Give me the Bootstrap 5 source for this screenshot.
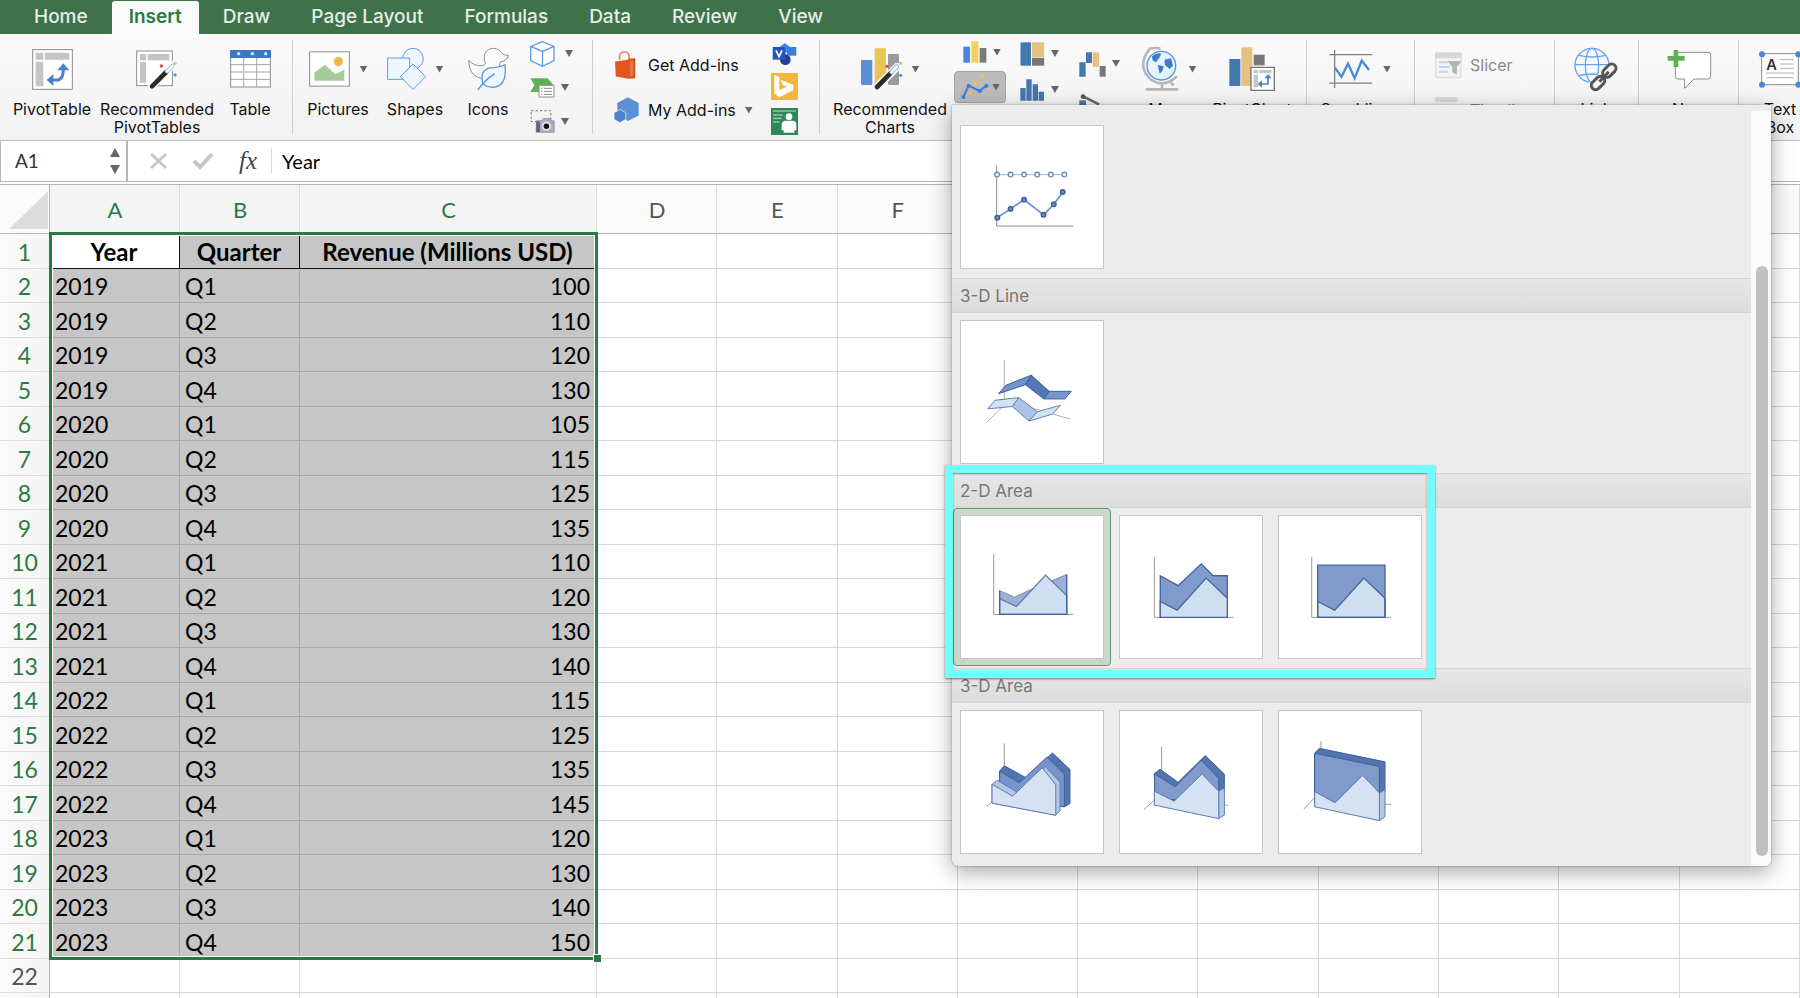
<!DOCTYPE html>
<html lang="en">
<head>
<meta charset="utf-8">
<meta name="viewport" content="width=device-width, initial-scale=1">
<title>Workbook - Insert chart</title>
<link href="https://cdn.jsdelivr.net/npm/bootstrap@5.3.0/dist/css/bootstrap.min.css" rel="stylesheet">
<style>
:root { --xl-green: #2c7a41; --ui: Inter, "Liberation Sans", sans-serif; --cell: Lato, "Liberation Sans", sans-serif; }
html, body { height: 100%; overflow: hidden; }
body { font-family: var(--ui); color: #111; background: #fff; }
button { font: inherit; color: inherit; background: none; border: 0; padding: 0; }
svg { display: block; flex: none; overflow: visible; }

.tabstrip { background: #3e724b; height: 34px; padding: 1px 14px 0; }
.tabstrip a { color: #e4ede6; font-size: 19px; font-weight: 500; line-height: 31px; padding: 0 17px; margin: 0 4px 0 3px; border-radius: 3px 3px 0 0; text-decoration: none; white-space: nowrap; }
.tabstrip a.active { background: #fafafa; color: #2c7a41; font-weight: 600; }

.ribbon { height: 107px; padding-left: 8px; background: linear-gradient(#fafafa, #f2f2f2); border-bottom: 1px solid #bdbdbd; font-size: 16px; line-height: 18px; }
.ribbon > * { flex: none; }
.divider { width: 1px; height: 94px; margin: 6px 9px 0 10px; background: #cfcfcf; }
.tool { padding-top: 10px; white-space: nowrap; }
.tool .pic { height: 50px; gap: 10px; margin-bottom: 6px; }
.caret { width: 8px; height: 7px; background: #666; clip-path: polygon(0 0, 100% 0, 50% 100%); flex: none; }
.w-s { width: 64px; } .w-m { width: 72px; } .w-l { width: 82px; } .w-xl { width: 88px; } .w-xxl { width: 122px; }
.stack { padding-top: 6px; }
.stack button { height: 27px; }
.off { color: #8a8a8a; }
.pressed { width: 52px; background: #bcbcbc !important; border: 1px solid #a2a2a2 !important; border-radius: 4px; }

.fbar { height: 44px; border-bottom: 4px double #b5b5b5; font-family: var(--cell); background: #fff; }
.namebox { width: 128px; border: 1px solid #b5b5b5; border-width: 0 2px 0 1px; padding-right: 6px; }
.namebox input { width: 90px; border: 0; background: none; font-size: 19px; padding: 0 0 0 14px; color: #333; outline: 0; }
.fbar .formula { border: 0; border-left: 1px solid #d8d8d8; font-size: 20px; padding: 0 0 0 10px; height: 26px; outline: 0; }
.up { width: 10px; height: 9px; background: #666; clip-path: polygon(50% 0, 100% 100%, 0 100%); }
.down { width: 10px; height: 9px; background: #666; clip-path: polygon(0 0, 100% 0, 50% 100%); }
.fx { font: italic 25px/26px "Liberation Serif", serif; color: #444; }

.sheet { position: relative; font-family: var(--cell); font-size: 23px; line-height: 30px; }
.sheet table { width: 100%; table-layout: fixed; border-collapse: separate; border-spacing: 0; white-space: nowrap; }
.sheet thead th { height: 49px; background: #fafafa; color: #555; font-weight: 400; font-size: 22px; text-align: center; padding: 1px 0 0 1px; border-right: 1px solid #dcdcdc; border-bottom: 1px solid #b5b5b5; }
.sheet thead th.hot { background: #f4f4f4; color: var(--xl-green); }
.sheet thead th.corner { border-right-color: #b0b0b0; }
.sheet tbody tr { height: 34px; }
.sheet tbody tr:nth-child(odd) { height: 35px; }
.sheet tbody th { font-weight: 400; text-align: center; background: linear-gradient(90deg, #fbfbfb, #f4f4f4); color: #555; padding: 1px 0 0; border-bottom: 1px solid #dedede; border-right: 1px solid #b0b0b0; }
.sheet tbody th.hot { color: var(--xl-green); }
.sheet td { padding: 1px 6px 0 5px; border-right: 1px solid #d6d6d6; border-bottom: 1px solid #d6d6d6; color: #000; }
.sheet td.sel { background: #c6c6c6; border-color: #a6a6a6; }
.sheet td.head { font-weight: 700; font-size: 24px; text-align: center; border-color: #111; }
.sheet td.first { background: #fff; }
.sheet td.num { text-align: right; }
.c-row { width: 50px; } .c-a { width: 130px; } .c-b { width: 120px; } .c-c { width: 297px; }
.frame { position: absolute; left: 49px; top: 47px; width: 549px; bottom: 68px; border: 3px solid var(--xl-green); box-shadow: inset 0 0 0 1px #fff; pointer-events: none; }
.frame::after { content: ""; position: absolute; right: -6px; bottom: -5px; width: 8px; height: 8px; background: var(--xl-green); border: solid #fff; border-width: 1px 0 0 1px; }

.gallery { position: absolute; z-index: 10; left: -2px; top: 71px; width: 819px; padding: 13px 20px 3px 0; background: #ececec; border-radius: 0 0 6px 6px; box-shadow: 0 0 2px rgba(0,0,0,.45), 0 6px 22px rgba(0,0,0,.35); }
.gallery h6 { height: 35px; line-height: 34px; margin: 0; padding-left: 8px; font-size: 17px; font-weight: 400; color: #777; background: linear-gradient(#e6e6e6, #dcdcdc); border: solid #d4d4d4; border-width: 1px 0; }
.opts { height: 160px; gap: 1px; padding-left: 1px; }
.opts button { width: 158px; height: 158px; padding: 6px; border: 1px solid transparent; border-radius: 4px; }
.opts button.chosen { background: #c8d9cc; border-color: #5f9b70; }
.opts svg { width: 144px; height: 144px; background: #fff; border: 1px solid #c6c6c6; overflow: hidden; }
.callout-box { position: absolute; left: -7px; top: -8px; width: 490px; bottom: -10px; border: 8px solid #74fbfb; box-shadow: 0 1px 2px rgba(0,0,0,.5), inset 0 1px 2px rgba(0,0,0,.4); pointer-events: none; z-index: 2; }
.track { position: absolute; right: 0; top: 6px; bottom: 0; width: 20px; background: #fafafa; border-radius: 0 0 6px 0; padding: 155px 3px 10px 5px; }
.thumb { height: 100%; border-radius: 6px; background: #c0c0c0; }
</style>
</head>
<body>
<nav class="tabstrip d-flex">
  <a href="#">Home</a><a href="#" class="active">Insert</a><a href="#">Draw</a><a href="#">Page Layout</a><a href="#">Formulas</a><a href="#">Data</a><a href="#">Review</a><a href="#">View</a>
</nav>

<div class="ribbon d-flex" role="toolbar" aria-label="Insert">
  <button class="tool w-xl d-flex flex-column align-items-center">
    <span class="pic d-flex align-items-center"><svg width="41" height="41" viewBox="96 56 123 123"><rect x="98" y="58" width="119" height="119" fill="#fff" stroke="#8c8c8c" stroke-width="3"/><path d="M107 67h23v21h-23zM135 67h73v21h-73zM107 94h23v74h-23z" fill="#c4c4c4"/><path d="M152 149h18q20 0 20-34" fill="none" stroke="#4a82c8" stroke-width="9"/><path d="M140 149l20-18v36zM190 99l-18 21h36z" fill="#4a82c8"/></svg></span>
    <span>PivotTable</span></button>
  <button class="tool w-xxl d-flex flex-column align-items-center">
    <span class="pic d-flex align-items-center"><svg width="42" height="40" viewBox="411 62 126 120"><rect x="413" y="68" width="107" height="104" fill="#fff" stroke="#8c8c8c" stroke-width="3"/><path d="M423 77h18v19h-18zM446 77h65v19h-65zM423 101h18v62h-18z" fill="#c4c4c4"/><path d="M459 174l65-66" stroke="#fff" stroke-width="22" stroke-linecap="round"/><path d="M459 174l43-43" stroke="#2c2c2c" stroke-width="14" stroke-linecap="round"/><path d="M504 129l16-16" stroke="#9bc0dc" stroke-width="13" stroke-linecap="round"/><path d="M504 129l16-16" stroke="#fff" stroke-width="8" stroke-linecap="round"/><circle cx="487" cy="113" r="5" fill="#cf4a5a"/><circle cx="528" cy="105" r="5" fill="#eebc4a"/><circle cx="528" cy="140" r="5" fill="#5b97e0"/></svg></span>
    <span>Recommended</span><span>PivotTables</span></button>
  <button class="tool w-s d-flex flex-column align-items-center">
    <span class="pic d-flex align-items-center"><svg width="41" height="38" viewBox="690 62 123 114"><rect x="692" y="64" width="119" height="109" fill="#fff" stroke="#8c8c8c" stroke-width="3"/><path d="M690 62h123v24h-123z" fill="#3f78c2"/><path d="M692 106h119M692 128h119M692 150h119M731 86v87M770 86v87" stroke="#a8a8a8" stroke-width="3"/><g fill="#dce8f6"><circle cx="716" cy="73" r="5"/><circle cx="757" cy="73" r="5"/><circle cx="797" cy="73" r="5"/></g></svg></span>
    <span>Table</span></button>
  <div class="divider"></div>
  <button class="tool w-m d-flex flex-column align-items-center">
    <span class="pic d-flex align-items-center"><svg width="41" height="36" viewBox="38 64 123 107"><rect x="40" y="66" width="119" height="103" fill="#fff" stroke="#8c8c8c" stroke-width="3"/><path d="M54 153v-25l32-23 31 28 27-14v34z" fill="#a5cb98"/><circle cx="126" cy="95" r="14" fill="#efb84c"/></svg><i class="caret"></i></span>
    <span>Pictures</span></button>
  <button class="tool w-l d-flex flex-column align-items-center">
    <span class="pic d-flex align-items-center"><svg width="39" height="42" viewBox="272 56 117 126"><g fill="#eef6fe" stroke="#5b9bea" stroke-width="3"><circle cx="350" cy="88" r="31"/><path d="M274 86h66v64h-66z"/><path d="M350 104l38 38-38 38-38-38z"/></g></svg><i class="caret"></i></span>
    <span>Shapes</span></button>
  <button class="tool w-s d-flex flex-column align-items-center">
    <span class="pic d-flex align-items-center"><svg width="41" height="42" viewBox="499 55 123 126"><path d="M502 92c10 12 22 16 36 16c8 0 14-3 13-8c-10-22 2-44 24-44c14 0 22 8 26 16c5 4 12 5 19 5c-2 12-12 18-24 20c-4 6-2 12 2 18c-4 22-22 36-46 32c-34 0-52-22-50-55z" fill="#fafafa" stroke="#8c8c8c" stroke-width="3"/><path d="M544 164c-10-36 6-50 30-50c14 0 24-4 36-8c4 40-6 62-30 66c-14 2-28-2-36-8z" fill="#eef6fe" stroke="#5b9bea" stroke-width="4"/><path d="M529 180q20-28 50-48" fill="none" stroke="#5b9bea" stroke-width="5"/></svg></span>
    <span>Icons</span></button>
  <div class="stack w-m d-flex flex-column" style="padding-left:10px;gap:7px">
    <button class="d-flex align-items-center" aria-label="3D Models" style="gap:10px"><svg width="25" height="26" viewBox="690 29 74 77"><path d="M727 31l34 14v42l-34 17-35-17v-42zM692 45l35 15 34-15M727 60v44" fill="#fff" stroke="#5b9bea" stroke-width="4"/></svg><i class="caret"></i></button>
    <button class="d-flex align-items-center" style="gap:6px" aria-label="SmartArt"><svg width="25" height="20" viewBox="689 142 73 60"><path d="M689 143h52l18 21-14 20h-56l12-20z" fill="#5fb157"/><path d="M715 164h45v35h-45z" fill="#fff" stroke="#8c8c8c" stroke-width="3"/><path d="M721 173h4M721 182h4M721 191h4M730 173h24M730 182h24M730 191h24" stroke="#8c8c8c" stroke-width="3"/></svg><i class="caret"></i></button>
    <button class="d-flex align-items-center" style="gap:6px" aria-label="Screenshot"><svg width="25" height="23" viewBox="691 245 73 68"><path d="M694 247h58v32h-58z" fill="none" stroke="#777" stroke-width="3" stroke-dasharray="7 6"/><path d="M709 277h16l5-7h20l4 7h8v34h-53z" fill="#a9afbb" stroke="#7b8290" stroke-width="2"/><path d="M709 279h11v31h-11z" fill="#5f6776"/><circle cx="739" cy="293" r="14" fill="#dde1ea"/><circle cx="739" cy="293" r="8" fill="#111"/></svg><i class="caret"></i></button>
  </div>
  <div class="divider ms-0"></div>
  <div class="tool d-flex flex-column" style="padding-left:12px;width:169px">
    <button class="d-flex align-items-center" style="height:42px;gap:11px"><svg width="23" height="28" viewBox="286 149 68 86"><path d="M302 176v-12q2-12 15-12t14 12v10" fill="none" stroke="#f0814c" stroke-width="5"/><path d="M288 181l40-5v58l-38-7z" fill="#e2561f"/><path d="M328 173l22-2v62l-22 1z" fill="#d64d18"/><path d="M333 180l11-1v46l-11 2z" fill="#e97447"/></svg><span>Get Add-ins</span></button>
    <button class="d-flex align-items-center" style="height:48px;gap:9px"><svg width="25" height="26" viewBox="281 290 76 79"><path d="M323 291l33 17v38l-33 17-32-17v-38z" fill="#5a91d6"/><path d="M299 328l18 10v20l-18 10-18-10v-20z" fill="#4a82cc" stroke="#fff" stroke-width="2"/></svg><span>My Add-ins</span><i class="caret"></i></button>
  </div>
  <div class="stack d-flex flex-column" style="width:38px;gap:6px">
    <button aria-label="Visio"><svg width="27" height="22" viewBox="755 126 75 66"><path d="M793 126l22 16-22 16-20-16z" fill="#3c8de0"/><path d="M800 138h28v26h-28z" fill="#3a7fd6"/><circle cx="795" cy="176" r="16" fill="#1d3f94"/><path d="M757 138h38v38h-38z" fill="#2457b8"/><path d="M767 148l9 19 9-19" fill="none" stroke="#fff" stroke-width="5"/></svg></button>
    <button aria-label="Bing Maps"><svg width="27" height="27" viewBox="752 221 81 81"><path d="M752 221h81v81h-81z" fill="#f3b63c"/><path d="M762 227l15 6v40l22-11-12-6-6-15 38 15v17l-42 21-15-12z" fill="#fff"/></svg></button>
    <button style="padding-top:2px" aria-label="People Graph"><svg width="27" height="27" viewBox="752 325 81 81"><path d="M752 325h81v81h-81z" fill="#2f8657"/><path d="M758 334h69M758 346h30M758 356h26M758 367h20" stroke="#8dc3a4" stroke-width="5"/><circle cx="806" cy="351" r="10" fill="#fff"/><path d="M784 392v-17q0-12 12-12h20q12 0 12 12v17h-6v7h-32v-7z" fill="#fff"/></svg></button>
  </div>
  <div class="divider"></div>
  <button class="tool w-xxl d-flex flex-column align-items-center">
    <span class="pic d-flex align-items-center"><svg width="41" height="42" viewBox="1026 148 123 126"><rect x="1026" y="184" width="34" height="75" rx="4" fill="#5b8ed2"/><rect x="1067" y="149" width="34" height="109" rx="4" fill="#e9c456"/><rect x="1107" y="166" width="33" height="93" rx="4" fill="#9a9a9a"/><path d="M1074 265l60-60" stroke="#f7f7f7" stroke-width="24" stroke-linecap="round"/><path d="M1074 265l40-41" stroke="#2c2c2c" stroke-width="14" stroke-linecap="round"/><path d="M1118 220l15-16" stroke="#8fb4d0" stroke-width="14" stroke-linecap="round"/><path d="M1118 220l15-16" stroke="#fff" stroke-width="8" stroke-linecap="round"/><circle cx="1104" cy="203" r="5" fill="#cf4a5a"/><circle cx="1145" cy="194" r="5" fill="#eebc4a"/><circle cx="1145" cy="230" r="5" fill="#5b97e0"/></svg><i class="caret"></i></span>
    <span>Recommended</span><span>Charts</span></button>

  <div class="position-relative" style="margin-left:3px;padding-top:7px">
    <button class="d-flex align-items-center" style="height:22px;gap:6px;padding-left:9px;margin-bottom:8px" aria-label="Column chart"><svg width="24" height="22" viewBox="70 125 72 66"><path d="M71 142h20v48h-20z" fill="#4a86e0"/><path d="M95 126h21v64h-21z" fill="#f6cf5c"/><path d="M120 146h20v44h-20z" fill="#7b7b7b"/></svg><i class="caret"></i></button>
    <button class="pressed d-flex align-items-center" style="height:32px;gap:3px;padding-left:6px" aria-label="Line and area chart" aria-expanded="true"><svg width="28" height="24" viewBox="62 227 84 72"><path d="M89 280l37-48" stroke="#f0bf4a" stroke-width="5" stroke-dasharray="9 4"/><path d="M69 293l16-34 33 16 20-16" fill="none" stroke="#3b7ddd" stroke-width="6"/><g fill="#3b7ddd"><circle cx="69" cy="293" r="6"/><circle cx="85" cy="259" r="6"/><circle cx="118" cy="275" r="6"/><circle cx="138" cy="259" r="6"/></g><g fill="#f4c24c"><circle cx="126" cy="232" r="5"/><circle cx="104" cy="252" r="5"/><circle cx="89" cy="280" r="5"/></g></svg><i class="caret"></i></button>

    <div class="gallery">
      <div class="opts d-flex"><button aria-label="Stacked line with markers"><svg viewBox="61 76 430 430"><path d="M169 196v183h232" fill="none" stroke="#8a8a8a" stroke-width="3"/><path d="M170 223h204" stroke="#a6c4ea" stroke-width="4"/><path d="M170 354l41-27 41-28 59 46 31-32 28-37" fill="none" stroke="#6690d0" stroke-width="5"/><g fill="#fff" stroke="#6f8ab8" stroke-width="4"><circle cx="170" cy="223" r="7"/><circle cx="211" cy="223" r="7"/><circle cx="252" cy="223" r="7"/><circle cx="292" cy="223" r="7"/><circle cx="333" cy="223" r="7"/><circle cx="374" cy="223" r="7"/></g><g fill="#6a86bd" stroke="#3f5d9c" stroke-width="4"><circle cx="171" cy="354" r="7"/><circle cx="211" cy="327" r="7"/><circle cx="252" cy="299" r="7"/><circle cx="311" cy="345" r="7"/><circle cx="342" cy="313" r="7"/><circle cx="369" cy="276" r="7"/></g></svg></button></div>
      <h6>3-D Line</h6>
      <div class="opts d-flex"><button aria-label="3-D line"><svg viewBox="61 661 430 430"><path d="M192 779v138l-53 50M192 900l200 58" fill="none" stroke="#b0b0b0" stroke-width="3"/><g stroke-width="3" stroke-linejoin="round" stroke="#3f5f9c"><path d="M175 881l21-25 78-31-18 29z" fill="#6f93cc"/><path d="M256 854l18-29 54 49-16 23z" fill="#5578b2"/><path d="M312 897l16-23h67l-20 23z" fill="#7797cc"/></g><g stroke-width="3" stroke-linejoin="round" stroke="#6580ae"><path d="M142 927l22-26 72-8-20 27z" fill="#d3e2f4"/><path d="M216 920l20-27 56 43-25 28z" fill="#abc3e4"/><path d="M267 964l25-28 70-20-24 27z" fill="#d3e2f4"/></g></svg></button></div>
      <section class="position-relative">
        <h6>2-D Area</h6>
        <div class="opts d-flex">
          <button class="chosen" aria-label="Area"><svg viewBox="61 168 430 430"><path d="M160 283v183h241" fill="none" stroke="#999" stroke-width="3"/><path d="M178 394l45 20 52-24 60-25 46-20v121h-203z" fill="#9cb0d6" stroke="#7387b4" stroke-width="3"/><path d="M178 418l51 24 88-95 64 62v57h-203z" fill="#cddff0" stroke="#5f79af" stroke-width="4"/><path d="M178 394v72h203v-121" fill="none" stroke="#45629f" stroke-width="4"/></svg></button>
          <button aria-label="Stacked area"><svg viewBox="539 168 430 430"><path d="M643 292v183h240" fill="none" stroke="#999" stroke-width="3"/><path d="M661 349l54 30 70-66 36 36h43v126h-203z" fill="#7f9acb" stroke="#45629f" stroke-width="4"/><path d="M661 427l51 26 88-97 64 61v58h-203z" fill="#cddff0" stroke="#45629f" stroke-width="4"/></svg></button>
          <button aria-label="100% stacked area"><svg viewBox="1017 168 430 430"><path d="M1116 292v183h240" fill="none" stroke="#999" stroke-width="3"/><path d="M1134 317h204v158h-204z" fill="#7f9acb"/><path d="M1134 427l52 26 88-97 64 61v58h-204z" fill="#cddff0" stroke="#45629f" stroke-width="4"/><path d="M1134 317h204v158h-204z" fill="none" stroke="#45629f" stroke-width="4"/></svg></button>
        </div>
        <div class="callout-box"></div>
      </section>
      <h6>3-D Area</h6>
      <div class="opts d-flex">
        <button aria-label="3-D area"><svg viewBox="61 154 430 430"><path d="M192 252v90M155 430l-17 13" stroke="#999" stroke-width="3"/><g stroke="#3f5f9c" stroke-width="3" stroke-linejoin="round"><path d="M178 336l14-16 66 36 80-75 53 50v103l-17 10-60-10-136-32z" fill="#5275b0"/><path d="M178 336l60 35 84-78 52 52v99l-60-8-136-40z" fill="#7595cc"/></g><g stroke="#5f79af" stroke-width="3" stroke-linejoin="round"><path d="M155 376l16-12 64 38 82-79 44 46v87l-13 13-193-36z" fill="#b1c6e4"/><path d="M155 376l62 36 90-86 41 52v92l-193-37z" fill="#d5e2f3"/></g></svg></button>
        <button aria-label="3-D stacked area"><svg viewBox="539 154 430 430"><path d="M665 262v70M643 424l-31 28M855 437l11 4" stroke="#999" stroke-width="3"/><g stroke="#3f5f9c" stroke-width="3" stroke-linejoin="round"><path d="M643 344l17-14 55 40 82-81 58 56v46l-17 10-193 38z" fill="#5275b0"/><path d="M643 344l63 39 79-80 53 55v50l-193 20z" fill="#7f9acb"/></g><g stroke="#5f79af" stroke-width="3" stroke-linejoin="round"><path d="M838 397l17-10v82l-17 11z" fill="#b1cae8"/><path d="M643 397l60 30 84-82 51 52v83l-195-41z" fill="#d5e2f3"/></g></svg></button>
        <button aria-label="3-D 100% stacked area"><svg viewBox="1017 154 430 430"><path d="M1144 246v30M1125 416l-33 35M1338 436l18 1" stroke="#999" stroke-width="3"/><g stroke="#3f5f9c" stroke-width="3" stroke-linejoin="round"><path d="M1125 282l14-15 199 41v92l-17 6-196-6z" fill="#5275b0"/><path d="M1125 282l196 40v160l-196-42z" fill="#7f9acb"/></g><g stroke="#5f79af" stroke-width="3" stroke-linejoin="round"><path d="M1321 402l17-10v82l-17 12z" fill="#b1cae8"/><path d="M1125 398l62 34 83-83 51 53v84l-196-42z" fill="#d5e2f3"/></g></svg></button>
      </div>
      <div class="track"><div class="thumb"></div></div>
    </div>
  </div>

  <div class="stack d-flex flex-column" style="margin-left:14px;gap:9px">
    <button class="d-flex align-items-center" style="gap:6px" aria-label="Hierarchy chart"><svg width="25" height="24" viewBox="242 121 75 73"><path d="M243 122h32v71h-32z" fill="#4476b0"/><path d="M278 122h37v45h-37z" fill="#e6c181"/><path d="M278 169h37v24h-37z" fill="#777"/></svg><i class="caret"></i></button>
    <button class="d-flex align-items-center" style="gap:6px" aria-label="Statistical chart"><svg width="25" height="22" viewBox="242 228 75 66"><path d="M243 255h16v38h-16zM261 229h16v64h-16zM280 244h16v49h-16zM298 266h16v27h-16z" fill="#4476b0"/></svg><i class="caret"></i></button>
  </div>
  <div class="d-flex flex-column" style="margin-left:20px;padding-top:18px;width:42px;gap:17px">
    <button class="d-flex" style="gap:6px;padding-top:0" aria-label="Waterfall chart"><svg width="27" height="25" viewBox="418 156 81 75"><path d="M419 187h19v43h-19zM439 157h18v32h-18z" fill="#4476b0"/><path d="M459 157h19v43h-19z" fill="#e6c181"/><path d="M480 198h18v32h-18z" fill="#777"/></svg><i class="caret mt-2"></i></button>
    <button aria-label="Combo chart"><svg width="20" height="26" viewBox="418 283 60 78"><path d="M419 302h20v50h-20z" fill="#4476b0"/><path d="M430 290l48 24" stroke="#666" stroke-width="8"/><circle cx="430" cy="291" r="7" fill="#555"/></svg></button>
  </div>
  <button class="tool w-xl ms-1 d-flex flex-column align-items-center">
    <span class="pic d-flex align-items-center"><svg width="37" height="44" viewBox="603 144 111 132"><path d="M622 150q30-6 36 0M626 150q-40 50 2 90 40 30 80-8" fill="none" stroke="#b8b8b8" stroke-width="8"/><path d="M663 250v18M614 271h98M688 248l10 12" stroke="#b8b8b8" stroke-width="8"/><circle cx="661" cy="200" r="43" fill="#e6f2fd" stroke="#4f95e4" stroke-width="4"/><path d="M633 172q14-12 28-8l-6 12-10 14q-12-2-12-18zM670 182l20-4 6 22-10 10-14-12zM650 198l18 4-4 14-8 8z" fill="#3f7cc4"/></svg><i class="caret"></i></span>
    <span>Maps</span></button>
  <button class="tool w-xl d-flex flex-column align-items-center" style="margin-left:-5px">
    <span class="pic d-flex align-items-center"><svg width="46" height="44" viewBox="864 148 138 132"><path d="M865 184h33v81h-33z" fill="#4476b0"/><path d="M901 149h33v116h-33z" fill="#e6c181"/><path d="M938 171h33v32h-33z" fill="#777"/><path d="M930 209h70v69h-70z" fill="#fff" stroke="#777" stroke-width="4"/><path d="M938 217h13v10h-13zM955 217h36v10h-36zM938 231h13v38h-13z" fill="#c4c4c4"/><path d="M956 259h25v-22" fill="none" stroke="#4a82c8" stroke-width="5"/><path d="M950 259l13-11v22zM981 229l-11 13h22z" fill="#4a82c8"/></svg></span>
    <span>PivotChart</span></button>
  <div class="divider"></div>
  <button class="tool w-xl d-flex flex-column align-items-center">
    <span class="pic d-flex align-items-center"><svg width="44" height="38" viewBox="1166 149 132 116"><path d="M1182 149v116M1166 163h131M1166 250h131" stroke="#808080" stroke-width="4"/><path d="M1183 203l20 28 20-40 20 44 22-54 22 29" fill="none" stroke="#4a86dc" stroke-width="7"/></svg><i class="caret"></i></span>
    <span>Sparklines</span></button>
  <div class="divider"></div>
  <div class="tool off d-flex flex-column" style="padding-left:11px;width:120px">
    <button class="d-flex align-items-center" style="height:42px;gap:8px"><svg width="27" height="26" viewBox="225 158 80 76"><rect x="227" y="160" width="75" height="73" rx="4" fill="#f3f3f3" stroke="#dcdcdc" stroke-width="4"/><path d="M226 160h78v16h-78z" fill="#d8d8d8"/><path d="M236 188h27M236 202h32M236 216h27" stroke="#bcd6f2" stroke-width="6"/><path d="M262 184h42l-14 18v22l-14-6v-16z" fill="#b4b4b4"/></svg><span>Slicer</span></button>
    <button class="d-flex align-items-center" style="height:48px;gap:8px"><svg width="27" height="26" viewBox="225 292 80 76"><path d="M226 292h66v14h-66z" fill="#d8d8d8"/><path d="M236 318h27" stroke="#bcd6f2" stroke-width="6"/></svg><span>Timeline</span></button>
  </div>
  <div class="divider"></div>
  <button class="tool w-s d-flex flex-column align-items-center">
    <span class="pic d-flex align-items-center"><svg width="43" height="43" viewBox="643 145 129 129"><g fill="none" stroke="#66a3ee" stroke-width="4"><circle cx="694" cy="197" r="51" fill="#f4f9ff"/><ellipse cx="694" cy="197" rx="20" ry="51"/><path d="M643 195h102M655 167q39 10 80 0M655 228q36-10 76 0"/></g><path d="M704 258l48-50" stroke="#f6f6f6" stroke-width="36" stroke-linecap="round"/><g fill="none" stroke="#555" stroke-width="9"><rect x="-23" y="-13" width="46" height="26" rx="13" transform="translate(746 213) rotate(-45)"/><rect x="-23" y="-13" width="46" height="26" rx="13" transform="translate(712 250) rotate(-45)"/><path d="M716 246l28-30"/></g></svg></span>
    <span>Link</span></button>
  <div class="divider"></div>
  <button class="tool w-l d-flex flex-column align-items-center">
    <span class="pic d-flex align-items-center"><svg width="43" height="39" viewBox="912 153 129 117"><path d="M940 160h92q8 0 8 8v64q0 8-8 8h-42l-28 28v-28h-20q-8 0-8-8v-64z" fill="#fff" stroke="#8c8c8c" stroke-width="3"/><path d="M936 153v51M911 178h51" stroke="#5fae54" stroke-width="14"/></svg></span>
    <span>New</span><span>Comment</span></button>
  <div class="divider ms-2"></div>
  <button class="tool w-s d-flex flex-column align-items-center">
    <span class="pic d-flex align-items-center"><svg width="42" height="37" viewBox="1196 152 126 111"><path d="M1204 160h110v93h-110z" fill="#fff" stroke="#8c8c8c" stroke-width="3"/><path d="M1259 178h41M1259 191h41M1259 204h41M1218 218h82M1218 232h82" stroke="#b0b0b0" stroke-width="3"/><text x="1218" y="208" font-size="44" font-weight="600" fill="#333">A</text><g fill="#4a86dc"><circle cx="1205" cy="162" r="9"/><circle cx="1314" cy="162" r="9"/><circle cx="1205" cy="253" r="9"/><circle cx="1314" cy="253" r="9"/></g></svg></span>
    <span>Text</span><span>Box</span></button>
</div>

<div class="fbar d-flex align-items-center">
  <div class="namebox h-100 d-flex align-items-center justify-content-between">
    <input type="text" value="A1" aria-label="Name box">
    <span class="d-flex flex-column gap-2"><i class="up"></i><i class="down"></i></span>
  </div>
  <button style="margin-left:22px" aria-label="Cancel"><svg width="17" height="16" viewBox="0 0 17 16"><path d="M1 1l15 14M16 1L1 15" stroke="#c6c6c6" stroke-width="3"/></svg></button>
  <button style="margin-left:26px" aria-label="Enter"><svg width="20" height="16" viewBox="0 0 20 16"><path d="M1 8l6 6L19 1" fill="none" stroke="#c6c6c6" stroke-width="4"/></svg></button>
  <button class="fx" style="margin-left:26px" aria-label="Insert function">fx</button>
  <input class="formula flex-grow-1" style="margin-left:14px" type="text" value="Year" aria-label="Formula bar">
</div>

<main class="sheet">
  <table>
    <colgroup><col class="c-row"><col class="c-a"><col class="c-b"><col class="c-c"><col span="10"></colgroup>
    <thead><tr id="letters"><th class="corner"><svg width="40" height="38" style="margin-left:8px" viewBox="0 0 40 38"><path d="M39 0v38H0z" fill="#dcdcdc"/></svg></th></tr></thead>
    <tbody id="rows"></tbody>
  </table>
  <div class="frame"></div>
</main>

<script>
const revenue = { 2019: [100, 110, 120, 130], 2020: [105, 115, 125, 135], 2021: [110, 120, 130, 140], 2022: [115, 125, 135, 145], 2023: [120, 130, 140, 150] };
document.getElementById('letters').insertAdjacentHTML('beforeend',
  [...'ABCDEFGHIJKLM'].map((l, i) => `<th scope="col" class="${i < 3 ? 'hot' : ''}">${l}</th>`).join(''));
const blank = '<td></td>'.repeat(10);
const lines = ['<tr><th scope="row" class="hot">1</th><td class="sel head first">Year</td><td class="sel head">Quarter</td><td class="sel head">Revenue (Millions USD)</td>' + blank + '</tr>'];
for (const [year, values] of Object.entries(revenue))
  values.forEach((v, q) => lines.push(`<tr><th scope="row" class="hot">${lines.length + 1}</th><td class="sel">${year}</td><td class="sel">Q${q + 1}</td><td class="sel num">${v}</td>${blank}</tr>`));
for (const n of [22, '']) lines.push(`<tr><th scope="row">${n}</th>${'<td></td>'.repeat(13)}</tr>`);
document.getElementById('rows').innerHTML = lines.join('');
</script>
<script src="https://cdn.jsdelivr.net/npm/bootstrap@5.3.0/dist/js/bootstrap.bundle.min.js"></script>
</body>
</html>
